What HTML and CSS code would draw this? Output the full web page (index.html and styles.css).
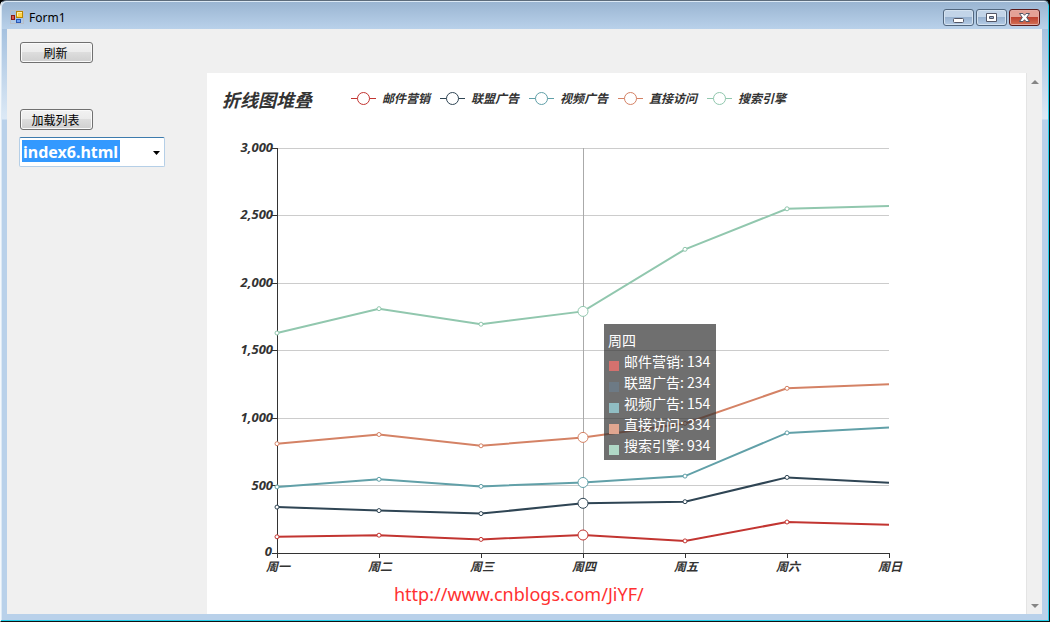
FILE: index.html
```html
<!DOCTYPE html>
<html lang="zh-CN">
<head>
<meta charset="utf-8">
<title>Form1</title>
<link rel="stylesheet" href="styles.css">
</head>
<body>
<div class="window">
  <header class="titlebar">
    <svg class="app-icon" width="14" height="14" viewBox="0 0 14 14" aria-hidden="true">
      <rect x=".5" y=".5" width="13" height="13" fill="none" stroke="#b7bec8"/>
      <rect x="6.5" y="1.5" width="6" height="6" fill="#ffd54b" stroke="#b98500"/>
      <path d="M7.5 6V2.5H12" fill="none" stroke="#fff0b0"/>
      <rect x="1.5" y="5.5" width="3" height="4" fill="#d8574b" stroke="#8c1c14"/>
      <rect x="6.5" y="9.5" width="4" height="3" fill="#6fa0f0" stroke="#2958b5"/>
    </svg>
    <h1 class="caption">Form1</h1>
    <div class="window-buttons">
      <button class="window-button" type="button" aria-label="最小化"><svg width="29" height="15" viewBox="0 0 29 15"><rect x="9.5" y="8.5" width="10" height="4" rx="1" fill="#fff" stroke="#535666"/></svg></button>
      <button class="window-button" type="button" aria-label="最大化"><svg width="29" height="15" viewBox="0 0 29 15"><path fill-rule="evenodd" d="M9.5 3.5h10v8h-10zM12.5 6.5v2h4v-2z" fill="#fff" stroke="#535666"/></svg></button>
      <button class="window-button close" type="button" aria-label="关闭"><svg width="29" height="15" viewBox="0 0 29 15"><path d="M9.500 3.500H13L14.500 5.300 16 3.500H19.500L16.700 7.500 19.500 11.500H16L14.500 9.700 13 11.500H9.500L12.300 7.500Z" fill="#fff" stroke="#535666"/></svg></button>
    </div>
  </header>
  <main class="client">
    <aside class="sidebar">
      <button class="push refresh" type="button">刷新</button>
      <button class="push" type="button">加载列表</button>
      <div class="combo">
        <select class="combo-select" aria-label="页面列表"><option>index6.html</option></select>
        <svg class="combo-arrow" width="7" height="4" viewBox="0 0 7 4" aria-hidden="true"><path d="M0 0H7L3.500 4Z"/></svg>
      </div>
    </aside>
    <section class="browser">
      <div class="page">
        <div class="chart-head">
          <h2 class="chart-title">折线图堆叠</h2>
          <ul class="legend">
            <li class="legend-item email"><svg class="legend-mark" width="25" height="14" viewBox="0 0 25 14"><path d="M0 7.500H25"/><circle cx="12.500" cy="7.500" r="6"/></svg>邮件营销</li>
            <li class="legend-item union"><svg class="legend-mark" width="25" height="14" viewBox="0 0 25 14"><path d="M0 7.500H25"/><circle cx="12.500" cy="7.500" r="6"/></svg>联盟广告</li>
            <li class="legend-item video"><svg class="legend-mark" width="25" height="14" viewBox="0 0 25 14"><path d="M0 7.500H25"/><circle cx="12.500" cy="7.500" r="6"/></svg>视频广告</li>
            <li class="legend-item direct"><svg class="legend-mark" width="25" height="14" viewBox="0 0 25 14"><path d="M0 7.500H25"/><circle cx="12.500" cy="7.500" r="6"/></svg>直接访问</li>
            <li class="legend-item search"><svg class="legend-mark" width="25" height="14" viewBox="0 0 25 14"><path d="M0 7.500H25"/><circle cx="12.500" cy="7.500" r="6"/></svg>搜索引擎</li>
          </ul>
        </div>
        <div class="plot">
          <svg class="plot-svg" width="720" height="450" viewBox="207 130 720 450" role="img" aria-label="折线图堆叠">
            <path class="grid" d="M277 148.500H889M277 215.500H889M277 283.500H889M277 350.500H889M277 418.500H889M277 485.500H889"/>
            <path class="axis" d="M277.500 148V558M272 553.500H890M272 148.500H277M272 215.500H277M272 283.500H277M272 350.500H277M272 418.500H277M272 485.500H277M379.500 553V558M481.500 553V558M583.500 553V558M685.500 553V558M787.500 553V558M889.500 553V558"/>
            <path class="pointer" d="M583.500 148V553"/>
            <g class="axis-text y-text">
              <text x="273" y="152">3,000</text><text x="273" y="219">2,500</text><text x="273" y="287">2,000</text><text x="273" y="354">1,500</text><text x="273" y="422">1,000</text><text x="273" y="490">500</text><text x="272" y="556">0</text>
            </g>
            <g class="axis-text x-text">
              <text x="278" y="571">周一</text><text x="380" y="571">周二</text><text x="482" y="571">周三</text><text x="584" y="571">周四</text><text x="686" y="571">周五</text><text x="788" y="571">周六</text><text x="890" y="571">周日</text>
            </g>
            <g class="series email">
              <polyline points="277,536.8 379,535.2 481,539.4 583,534.9 685,540.9 787,522 889,524.7"/>
              <circle cx="277" cy="536.800" r="2"/><circle cx="379" cy="535.200" r="2"/><circle cx="481" cy="539.400" r="2"/><circle cx="583" cy="535" r="5"/><circle cx="685" cy="540.900" r="2"/><circle cx="787" cy="522" r="2"/>
            </g>
            <g class="series union">
              <polyline points="277,507.1 379,510.6 481,513.6 583,503.3 685,501.7 787,477.4 889,482.8"/>
              <circle cx="277" cy="507.100" r="2"/><circle cx="379" cy="510.600" r="2"/><circle cx="481" cy="513.600" r="2"/><circle cx="583" cy="503.300" r="5"/><circle cx="685" cy="501.700" r="2"/><circle cx="787" cy="477.400" r="2"/>
            </g>
            <g class="series video">
              <polyline points="277,486.9 379,479.3 481,486.4 583,482.5 685,476.1 787,432.9 889,427.5"/>
              <circle cx="277" cy="486.900" r="2"/><circle cx="379" cy="479.300" r="2"/><circle cx="481" cy="486.400" r="2"/><circle cx="583" cy="482.500" r="5"/><circle cx="685" cy="476.100" r="2"/><circle cx="787" cy="432.900" r="2"/>
            </g>
            <g class="series direct">
              <polyline points="277,443.7 379,434.5 481,445.8 583,437.4 685,423.4 787,388.3 889,384.3"/>
              <circle cx="277" cy="443.700" r="2"/><circle cx="379" cy="434.500" r="2"/><circle cx="481" cy="445.800" r="2"/><circle cx="583" cy="437.400" r="5"/><circle cx="685" cy="423.400" r="2"/><circle cx="787" cy="388.300" r="2"/>
            </g>
            <g class="series search">
              <polyline points="277,333 379,308.7 481,324.2 583,311.4 685,249.3 787,208.8 889,206.1"/>
              <circle cx="277" cy="333" r="2"/><circle cx="379" cy="308.700" r="2"/><circle cx="481" cy="324.200" r="2"/><circle cx="583" cy="311.400" r="5"/><circle cx="685" cy="249.300" r="2"/><circle cx="787" cy="208.800" r="2"/>
            </g>
          </svg>
          <div class="tooltip">
            <div>周四</div>
            <div class="tip-row email">邮件营销: 134</div>
            <div class="tip-row union">联盟广告: 234</div>
            <div class="tip-row video">视频广告: 154</div>
            <div class="tip-row direct">直接访问: 334</div>
            <div class="tip-row search">搜索引擎: 934</div>
          </div>
        </div>
        <a class="link" href="http://www.cnblogs.com/JiYF/">http://www.cnblogs.com/JiYF/</a>
      </div>
      <div class="scrollbar" aria-hidden="true">
        <svg width="8" height="4" viewBox="0 0 8 4"><path d="M0 4H8L4 0Z" fill="#858585"/></svg>
        <svg width="8" height="4" viewBox="0 0 8 4"><path d="M0 0H8L4 4Z" fill="#858585"/></svg>
      </div>
    </section>
  </main>
</div>
</body>
</html>
```
FILE: styles.css
```css
* { box-sizing: border-box; }

body {
  margin: 0;
  background: #000;
  font-family: "Noto Sans", "Noto Sans CJK SC", sans-serif;
  color: #000;
}

.window {
  display: flex;
  flex-direction: column;
  min-height: 100vh;
  padding: 0 7px 7px 6px;
  border: 1px solid #111;
  border-left-color: #f4f8fc;
  border-top-color: #5d6c7c;
  border-radius: 6px 6px 0 0;
  box-shadow: inset -1px -1px #24cfea, inset 1px 1px #dce9f5;
  background:
    linear-gradient(#99b4d1, #b9d1ea 28px, transparent 28px),
    linear-gradient(#a5c1df 28px, #dce9f6 118px, #b9d1ea 119px);
}

.titlebar {
  display: flex;
  align-items: center;
  gap: 5px;
  height: 28px;
  padding-left: 3px;
}

.app-icon { margin-top: 4px; }

.caption {
  flex: 1;
  margin: 6px 0 0;
  font-size: 12px;
  font-weight: 400;
  line-height: 18px;
}

.window-buttons {
  display: flex;
  gap: 2px;
  margin: 5px 2px 0 0;
}

.window-button {
  display: flex;
  width: 31px;
  height: 17px;
  padding: 0;
  border: 1px solid #52677f;
  border-radius: 3px;
  box-shadow: inset 0 0 0 1px #d4e2f0;
  background: linear-gradient(#c2d4e8 50%, #98b2d0 50%, #b5cce6);
}

.window-button.close {
  border-color: #5a1b1b;
  box-shadow: inset 0 0 0 1px #e4aaa2;
  background: linear-gradient(#e4a196 45%, #bd4230 50%, #d47055);
}

.client {
  display: flex;
  flex: 1;
  background: #f0f0f0;
}

.sidebar {
  display: flex;
  flex: 0 0 200px;
  flex-direction: column;
  align-items: flex-start;
  padding: 13px 12px;
}

.push {
  width: 73px;
  height: 21px;
  margin-left: 1px;
  padding: 0 2px 0 0;
  border: 1px solid #707070;
  border-radius: 3px;
  box-shadow: inset 0 0 0 1px #fafafa;
  background: linear-gradient(#f2f2f2, #ebebeb 50%, #dddddd 50%, #cfcfcf);
  color: #000;
  font: 12px/18px "Noto Sans CJK SC", sans-serif;
}

.refresh { margin-bottom: 46px; }

.combo {
  display: flex;
  position: relative;
  width: 146px;
  height: 30px;
  margin-top: 7px;
}

.combo-select {
  width: 100%;
  padding: 0 0 0 3px;
  border: 1px solid #b5cfe7;
  border-top-color: #3d7bad;
  border-radius: 2px;
  outline: 0;
  appearance: none;
  background: linear-gradient(#3399ff, #3399ff) 2px 2px / 98px 22px no-repeat #fff;
  color: #fff;
  font: 700 16px/24px "Noto Sans", sans-serif;
}

.combo-arrow {
  position: absolute;
  top: 14px;
  right: 5px;
}

.browser {
  display: flex;
  flex: 1;
  min-width: 0;
  margin-top: 44px;
}

.page {
  flex: 1;
  min-width: 0;
  background: #fff;
}

.chart-head {
  display: flex;
  align-items: center;
  gap: 39px;
  height: 57px;
  padding: 0 0 5px 15px;
}

.chart-title {
  margin: 0;
  color: #333;
  font: italic 700 18px/26px "Noto Sans CJK SC", sans-serif;
}

.legend {
  display: flex;
  gap: 10px;
  margin: 0 0 2px;
  padding: 0;
  list-style: none;
  color: #333;
  font: italic 700 12px/18px "Noto Sans CJK SC", sans-serif;
}

.legend-item {
  display: flex;
  align-items: center;
  gap: 6px;
  white-space: nowrap;
}

.legend-mark {
  fill: #fff;
  stroke: var(--tone);
}

.email { --tone: #c23531; --tip: #d4716e; }
.union { --tone: #2f4554; --tip: #6d7a85; }
.video { --tone: #61a0a8; --tip: #90bdc3; }
.direct { --tone: #d48265; --tip: #e0a690; }
.search { --tone: #91c7ae; --tip: #b0d8c6; }

.plot {
  position: relative;
  width: 720px;
}

.plot-svg { display: block; }

.grid { fill: none; stroke: #ccc; }
.axis { fill: none; stroke: #333; }
.pointer { stroke: #aaa; }

.axis-text {
  fill: #333;
  font: italic 700 12px "Noto Sans", "Noto Sans CJK SC", sans-serif;
}

.y-text {
  font-size: 13px;
  text-anchor: end;
}

.x-text { text-anchor: middle; }

.series polyline {
  fill: none;
  stroke: var(--tone);
  stroke-width: 2;
}

.series circle {
  fill: #fff;
  stroke: var(--tone);
}

.tooltip {
  position: absolute;
  top: 194px;
  left: 397px;
  width: 112px;
  padding: 6px 4px 4px;
  background: rgba(50, 50, 50, 0.7);
  color: #fff;
  font: 14px/21px "Noto Sans CJK SC", sans-serif;
  white-space: nowrap;
}

.tip-row {
  display: flex;
  align-items: center;
  gap: 5px;
}

.tip-row::before {
  width: 10px;
  height: 10px;
  margin: 9px 0 0 1px;
  background: var(--tip);
  content: "";
}

.link {
  display: block;
  width: max-content;
  margin-left: 187px;
  color: #ff3131;
  font: 18px/28px "Noto Sans", sans-serif;
  text-decoration: none;
}

.scrollbar {
  display: flex;
  flex: 0 0 16px;
  flex-direction: column;
  align-items: center;
  justify-content: space-between;
  padding: 7px 0 6px;
  border-left: 1px solid #e4e4e4;
  background: #f0f0f0;
}
```
